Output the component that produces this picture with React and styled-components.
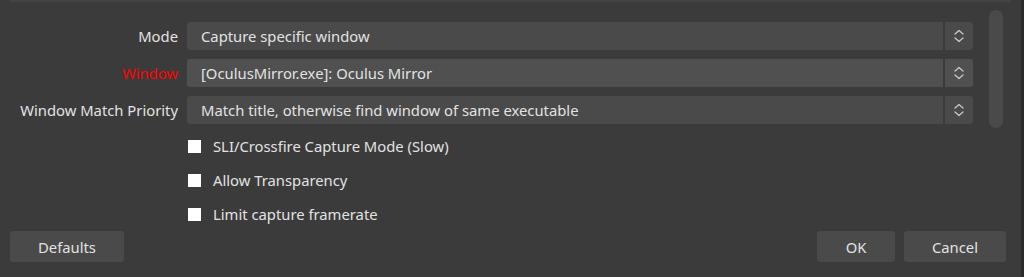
import React from 'react';
import styled, { createGlobalStyle } from 'styled-components';

const GlobalStyle = createGlobalStyle`
  html, body {
    margin: 0;
    padding: 0;
    background: #3b3b3b;
  }
  body {
    font-family: "Noto Sans", "Open Sans", sans-serif;
    font-size: 14.8px;
    color: #e2e2e2;
  }
`;

const Window = styled.div`
  width: 1024px;
  height: 277px;
  box-sizing: border-box;
  display: flex;
  flex-direction: column;
  background: #3b3b3b;
  border-right: 3px solid #2a2a2a;
  overflow: hidden;
`;

const TopEdge = styled.div`
  height: 2px;
  margin: 0 10px;
  background: #444444;
`;

const Body = styled.div`
  flex: 1;
  display: flex;
  padding-top: 8px;
`;

const Form = styled.div`
  flex: 1;
  display: flex;
  flex-direction: column;
  padding-top: 12px;
`;

const Fields = styled.div`
  display: grid;
  grid-template-columns: 178px 786px;
  grid-auto-rows: 28px;
  column-gap: 9px;
  row-gap: 9px;
`;

const Label = styled.div`
  display: flex;
  align-items: center;
  justify-content: flex-end;
  color: ${p => (p.$error ? '#ff0000' : '#e2e2e2')};
  white-space: nowrap;
`;

const Combo = styled.div`
  display: flex;
  align-items: stretch;
  background: ${p => (p.$hover ? '#505050' : '#4a4a4a')};
  border-radius: 3px;
  overflow: hidden;
`;

const ComboText = styled.div`
  flex: 1;
  display: flex;
  align-items: center;
  padding-left: 14px;
  border-right: 2px solid #3b3b3b;
  white-space: nowrap;
`;

const ComboArrows = styled.div`
  width: 28px;
  display: flex;
  align-items: center;
  justify-content: center;
`;

const Checks = styled.div`
  display: flex;
  flex-direction: column;
  padding-left: 188px;
  padding-top: 5px;
`;

const CheckRow = styled.label`
  height: 34px;
  display: flex;
  align-items: center;
  gap: 12px;
`;

const Box = styled.span`
  width: 13px;
  height: 13px;
  background: #ffffff;
`;

const ScrollTrack = styled.div`
  width: 14px;
  margin: 0 18px 0 16px;
  display: flex;
  flex-direction: column;
`;

const ScrollThumb = styled.div`
  height: 118px;
  border-radius: 7px;
  background: #4a4a4a;
`;

const Footer = styled.div`
  display: flex;
  align-items: center;
  gap: 9px;
  padding: 0 15px 15px 10px;
`;

const Spacer = styled.div`
  flex: 1;
`;

const Button = styled.button`
  height: 31px;
  width: ${p => p.$w}px;
  border: none;
  border-radius: 3px;
  background: #4a4a4a;
  color: #e2e2e2;
  font-family: inherit;
  font-size: 14.8px;
  padding: 0;
`;

const Chevrons = () => (
  <svg width="12" height="16" viewBox="0 0 12 16" fill="none" stroke="#c8c8c8" strokeWidth="1.3" strokeLinecap="round" strokeLinejoin="round">
    <path d="M2 6 L6 2.5 L10 6" />
    <path d="M2 10 L6 13.5 L10 10" />
  </svg>
);

const fields = [
  { label: 'Mode', value: 'Capture specific window' },
  { label: 'Window', value: '[OculusMirror.exe]: Oculus Mirror', error: true, hover: true },
  { label: 'Window Match Priority', value: 'Match title, otherwise find window of same executable' },
];

const checks = ['SLI/Crossfire Capture Mode (Slow)', 'Allow Transparency', 'Limit capture framerate'];

export default function App() {
  return (
    <>
      <GlobalStyle />
      <Window>
        <TopEdge />
        <Body>
          <Form>
            <Fields>
              {fields.map(f => (
                <React.Fragment key={f.label}>
                  <Label $error={f.error}>{f.label}</Label>
                  <Combo $hover={f.hover}>
                    <ComboText>{f.value}</ComboText>
                    <ComboArrows>
                      <Chevrons />
                    </ComboArrows>
                  </Combo>
                </React.Fragment>
              ))}
            </Fields>
            <Checks>
              {checks.map(c => (
                <CheckRow key={c}>
                  <Box />
                  {c}
                </CheckRow>
              ))}
            </Checks>
          </Form>
          <ScrollTrack>
            <ScrollThumb />
          </ScrollTrack>
        </Body>
        <Footer>
          <Button $w={114}>Defaults</Button>
          <Spacer />
          <Button $w={78}>OK</Button>
          <Button $w={102}>Cancel</Button>
        </Footer>
      </Window>
    </>
  );
}
